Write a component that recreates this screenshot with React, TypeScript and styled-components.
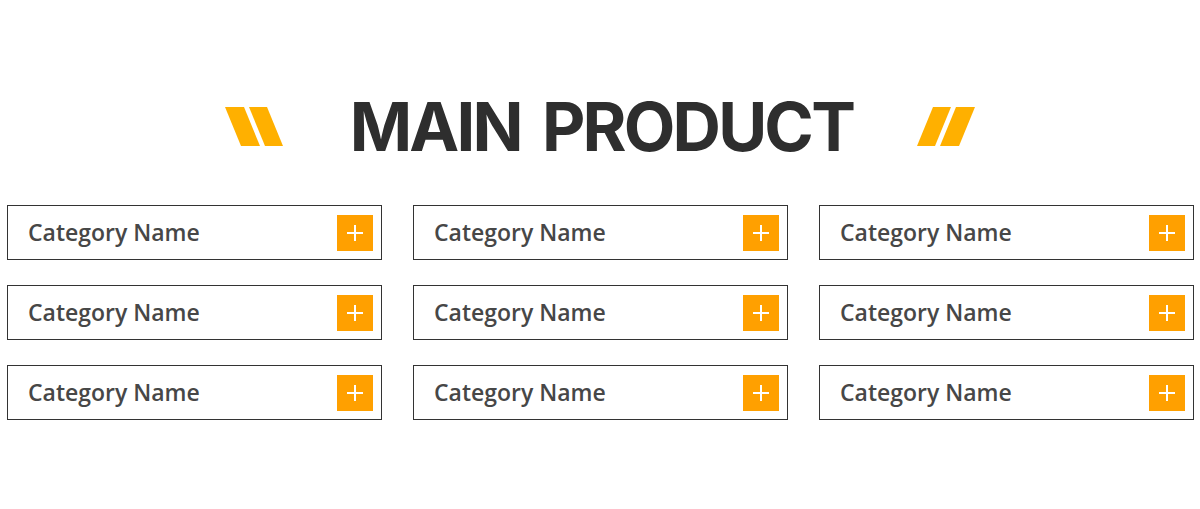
import React from "react";
import styled, { createGlobalStyle } from "styled-components";

const GlobalStyle = createGlobalStyle`
  html, body {
    margin: 0;
    padding: 0;
    background: #ffffff;
  }
  body {
    font-family: "Open Sans", "Noto Sans", sans-serif;
  }
`;

const Page = styled.div`
  width: 1200px;
  height: 509px;
  background: #ffffff;
  display: flex;
  flex-direction: column;
  overflow: hidden;
`;

const Header = styled.header`
  display: flex;
  align-items: center;
  justify-content: center;
  gap: 67px;
  padding-top: 91px;
  height: 70px;
`;

const Title = styled.h1`
  margin: 0;
  font-family: Inter, "Liberation Sans", sans-serif;
  font-weight: 700;
  font-size: 67px;
  line-height: 1;
  color: #2e2e2e;
  letter-spacing: -2.8px;
  word-spacing: 8px;
  margin-right: -2.8px;
  white-space: nowrap;
`;

const Grid = styled.div`
  margin-top: 44px;
  padding-left: 7px;
  display: grid;
  grid-template-columns: repeat(3, 375px);
  grid-auto-rows: 55px;
  column-gap: 31px;
  row-gap: 25px;
`;

const Card = styled.div`
  box-sizing: border-box;
  border: 1px solid #333333;
  display: flex;
  align-items: center;
  justify-content: space-between;
  padding: 0 8px 2px 20px;
`;

const Label = styled.span`
  font-family: "Open Sans", "Noto Sans", sans-serif;
  font-weight: 600;
  font-size: 23px;
  color: #474747;
`;

const PlusBox = styled.span`
  width: 36px;
  height: 36px;
  margin-top: 2px;
  background: #ffa000;
  display: flex;
  align-items: center;
  justify-content: center;
`;

const Slashes: React.FC<{ flip?: boolean }> = ({ flip }) => (
  <svg width="58" height="39" viewBox="0 0 58 39" style={{ display: "block" }}>
    <g fill="#ffb000" transform={flip ? "translate(58 0) scale(-1 1)" : undefined}>
      <polygon points="0,0 19,0 35,39 16,39" />
      <polygon points="24,0 42,0 58,39 40,39" />
    </g>
  </svg>
);

const Plus = () => (
  <svg width="16" height="16" viewBox="0 0 16 16">
    <path d="M8 0v16M0 8h16" stroke="#ffffff" strokeWidth="2" />
  </svg>
);

export default function App() {
  const items = Array.from({ length: 9 }, (_, i) => i);
  return (
    <>
      <GlobalStyle />
      <Page>
        <Header>
          <Slashes />
          <Title>MAIN PRODUCT</Title>
          <Slashes flip />
        </Header>
        <Grid>
          {items.map((i) => (
            <Card key={i}>
              <Label>Category Name</Label>
              <PlusBox>
                <Plus />
              </PlusBox>
            </Card>
          ))}
        </Grid>
      </Page>
    </>
  );
}
